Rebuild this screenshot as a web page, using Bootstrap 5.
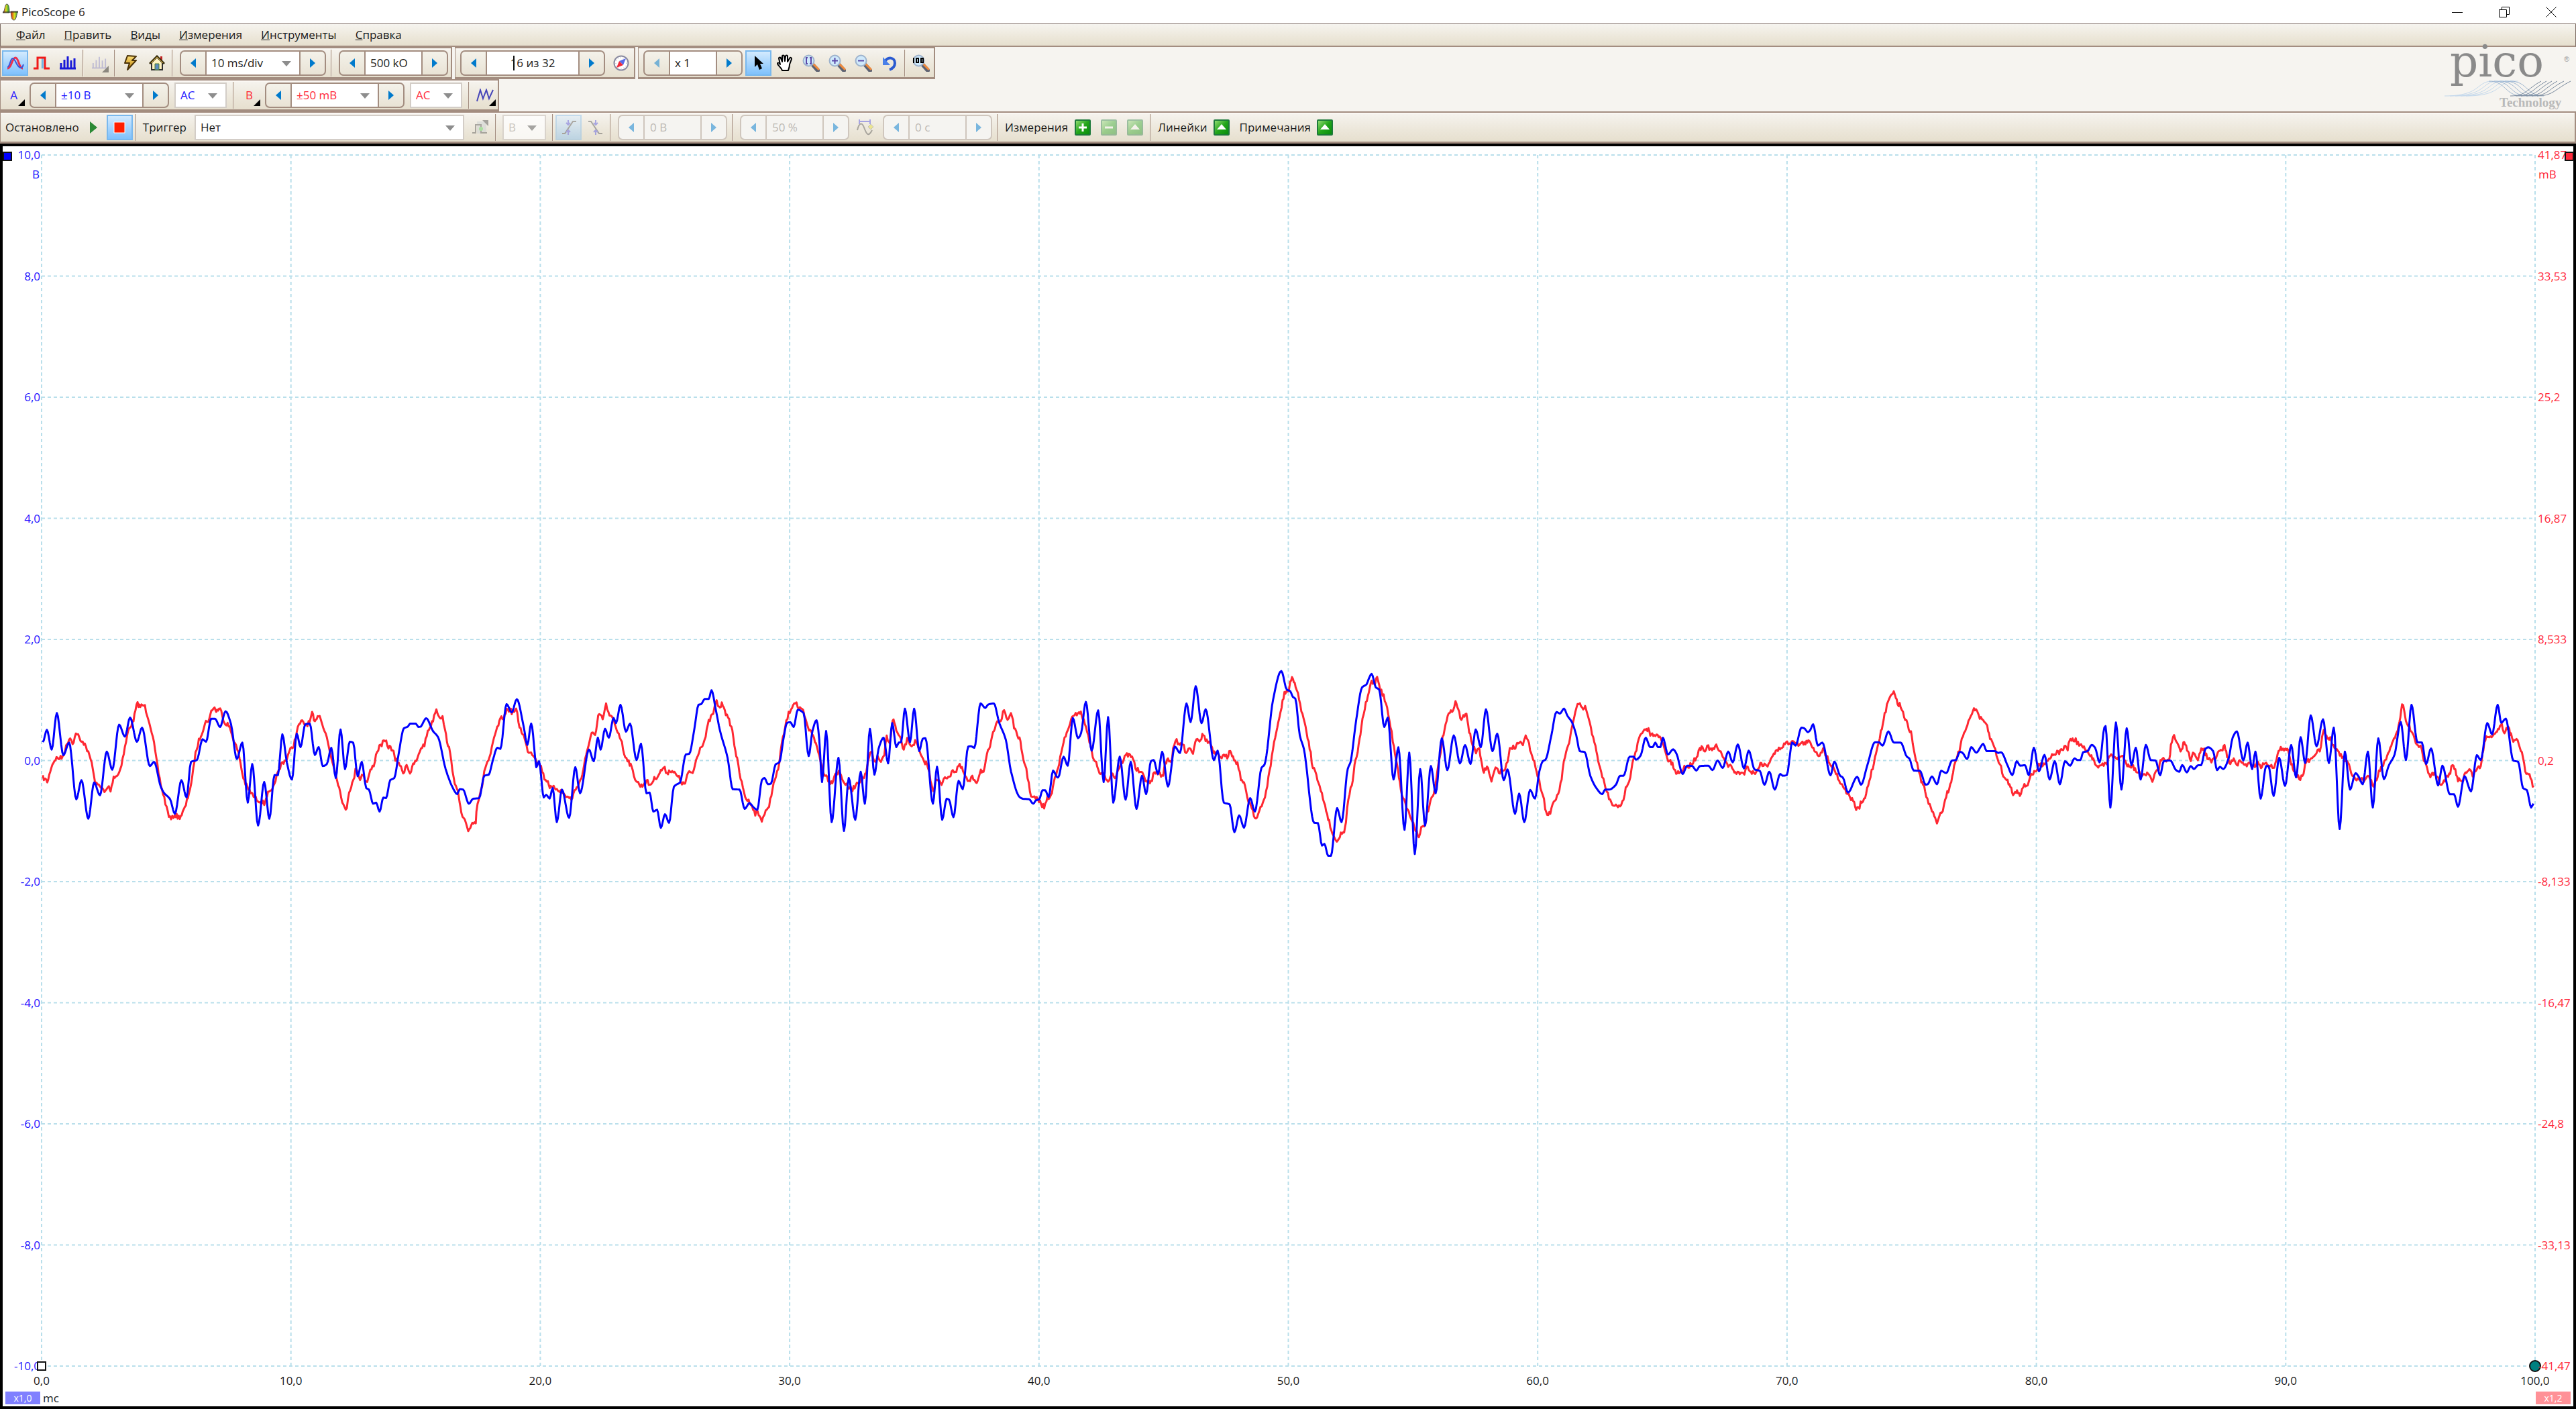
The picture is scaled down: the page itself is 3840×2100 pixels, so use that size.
<!DOCTYPE html>
<html lang="ru">
<head>
<meta charset="utf-8">
<meta name="viewport" content="width=device-width, initial-scale=1">
<title>PicoScope 6</title>
<link rel="stylesheet" href="https://cdn.jsdelivr.net/npm/bootstrap@5.3.0/dist/css/bootstrap.min.css">
<style>
:root{--edge:#a38d80;--face:linear-gradient(#f6f4ef,#ece7da 60%,#e6dfce);--chA:#2414ff;--chB:#ff2a3c;--grid:#b9dfeb}
body{font-family:"Open Sans","Noto Sans",sans-serif;font-size:17px;line-height:24px;color:#1a1a1a;background:#fff;overflow:hidden}
svg{display:block;flex:none}
.titlebar{height:35px;padding:0 2px 0 4px}
.titlebar .btn{width:70px;height:34px;padding:0;display:flex;align-items:center;justify-content:center}
.menubar{height:35px;background:var(--face);border:1px solid #7b6a62;border-bottom:2px solid var(--edge);padding:0 9px}
.menubar a{color:#1a1a1a;text-decoration:none;padding:0 14px}
.toolzone{background:#f6f4f0}
.toolbar-group{height:48px;background:var(--face);border:2px solid var(--edge);border-left-width:1px;border-bottom-width:3px;box-shadow:inset 0 2px #fbf8f4}
.first-group{padding-left:2px}
.tool{width:39px;height:38px;padding:0;border:2px solid transparent;border-radius:0;display:flex;align-items:center;justify-content:center;position:relative;flex:none;font-size:17px}
.tool.active,.tool.active:disabled{background:linear-gradient(#d3eafe,#7fc1fc)!important;border-color:#79b8ee!important}
.tool:disabled{opacity:.4;border-color:transparent}
.more::after{content:"";position:absolute;right:3px;bottom:3px;border:5px solid transparent;border-right-color:#000;border-bottom-color:#000}
.rule{width:2px;height:40px;background:var(--edge);margin:0 3px;flex:none;border-right:1px solid #efe9dd}
.spin{height:38px;border:2px solid var(--edge);border-radius:7px;margin:0 4px 0 7px;overflow:hidden;background:linear-gradient(#f4f2ea,#e9e3d5);flex:none}
.spin .step{width:36px;height:34px;padding:0;border:0;border-radius:0;display:flex;align-items:center;justify-content:center}
.spin .step:disabled{opacity:.5}
.spin.off{border-color:#cfc6bd;background:#f5f4f1}
.spin.off .field-box{border-color:#cfc6bd;background:#f5f4f1}
.field-box{border:0 solid var(--edge);border-width:0 2px;background:#fff;position:relative;height:34px}
.field-box input,.field-box select,.combo select{width:100%;height:34px;border:0;border-radius:0;padding:0 7px;font-size:17px;background:transparent;color:inherit;box-shadow:none;appearance:none;line-height:32px}
.field-box input:disabled,.combo select:disabled{color:#bdb9b4;background:transparent;opacity:1}
.drop::after{content:"";position:absolute;right:12px;top:14px;border:7px solid transparent;border-top:8px solid #8d8d8d;border-bottom:0;pointer-events:none}
.combo{height:38px;border:2px solid #d3cdc7;background:#fff;position:relative;flex:none}
.caret{position:absolute;left:39px;top:6px;width:2px;height:22px;background:#111}
.f-time{width:142px}.f-short{width:87px}.f-buffer{width:140px}.f-zoom{width:72px}.f-range{width:132px}
.c-coup{width:78px;margin:0 6px 0 4px}.c-trig{width:402px;margin:0 4px 0 10px}.c-src{width:65px;margin:0 6px}
.cha{color:var(--chA)}.chb{color:var(--chB)}
.brand{width:196px;color:#8c8c8c}
.scope{border:4px solid #000;background:#fff}
.yaxis{width:58px;position:relative}
.yaxis.right{width:57px}
.yaxis .tick{height:0;display:flex;align-items:center}
.yaxis .unit{position:absolute;top:17px}
.left-labels .tick{justify-content:flex-end;padding-right:2px}
.right-labels .tick{padding-left:4px;white-space:nowrap}
.left-labels .unit{right:3px}.right-labels .unit{left:5px}
.scope-body{padding-top:13px;min-height:0}
.xaxis{height:38px;padding:10px 57px 0 58px}
.xaxis .tick{width:0;display:flex;justify-content:center;white-space:nowrap}
.scale-row{height:22px;padding:0 4px 3px}
.scale-tag{width:52px;height:19px;line-height:19px;font-size:14px;text-align:center;color:#fff}
.tag-a{background:#8080ff}.tag-b{background:#ff9197}
.grip{position:absolute;width:14px;height:14px;border:2px solid #111}
.grip-a{left:0;top:-5px;background:#00f}
.grip-b{right:-1px;top:-5px;background:var(--chB)}
.grip-origin{left:-7px;bottom:-7px;background:#fff}
.grip-end{right:-9px;bottom:-9px;width:18px;height:18px;border-radius:9px;background:#008080}
.plot{position:relative;min-width:0}
.plot svg{position:absolute;inset:0;width:100%;height:100%;overflow:visible}
.gridline{stroke:var(--grid);stroke-width:2;stroke-dasharray:5 4;vector-effect:non-scaling-stroke}
.trace{fill:none;stroke-width:3;stroke-linejoin:round;vector-effect:non-scaling-stroke}
.lbl{padding:0 2px 0 7px}
</style>
<script src="https://cdn.jsdelivr.net/npm/bootstrap@5.3.0/dist/js/bootstrap.bundle.min.js"></script>
</head>
<body class="vh-100 d-flex flex-column">

<svg width="0" height="0" class="position-absolute" aria-hidden="true">
  <defs>
    <linearGradient id="gGreen" x1="0" y1="0" x2="1" y2="1"><stop offset="0" stop-color="#9be07a"/><stop offset=".5" stop-color="#22a51a"/><stop offset="1" stop-color="#058a0a"/></linearGradient>
    <linearGradient id="gBolt" x1="0" y1="0" x2="0" y2="1"><stop offset="0" stop-color="#ffe27a"/><stop offset="1" stop-color="#b87a00"/></linearGradient>
    <linearGradient id="gPulse"><stop offset="0" stop-color="#7a4a58"/><stop offset=".4" stop-color="#3a9ad8"/><stop offset="1" stop-color="#d8f0ff"/></linearGradient>
    <linearGradient id="gRainA" x1="0" y1="0" x2="1" y2="0"><stop offset="0" stop-color="#e01010"/><stop offset=".5" stop-color="#d8e020"/><stop offset="1" stop-color="#109040"/></linearGradient>
    <symbol id="i-left" viewBox="0 0 10 14"><path d="M9 0v14L1 7z" fill="#007acc"/></symbol>
    <symbol id="i-right" viewBox="0 0 10 14"><path d="M1 0v14l8-7z" fill="#007acc"/></symbol>
    <symbol id="i-lens" viewBox="0 0 26 26"><path d="M16 16l7 8" stroke="#5c6272" stroke-width="6" stroke-linecap="round"/><path d="M17 15l7 7" stroke="#f08a3c" stroke-width="3" stroke-linecap="round"/><circle cx="9.500" cy="9.500" r="8" fill="#cfe9fb" stroke="#9db2cc" stroke-width="2"/></symbol>
    <symbol id="i-up" viewBox="0 0 24 24"><rect x="1" y="1" width="22" height="22" rx="1" fill="url(#gGreen)" stroke="#1c7a3a" stroke-width="2"/><path d="M12 7l7 8H5z" fill="#fff"/></symbol>
  </defs>
</svg>

<header class="titlebar d-flex align-items-center">
  <svg width="24" height="26" viewBox="0 0 24 26"><path d="M0 14C3 14 3 1 6 1s4 5 4 13z" fill="url(#gRainA)" stroke="#555"/><path d="M12 12h11c-2 0-2 13-6 13s-4-5-5-13z" fill="url(#gRainA)" stroke="#555"/><path d="M0 13h23" stroke="#222"/></svg>
  <span class="ms-1 me-auto">PicoScope 6</span>
  <div class="d-flex">
    <button class="btn" aria-label="Свернуть"><svg width="16" height="16"><path d="M0 8.500h16" stroke="#000"/></svg></button>
    <button class="btn" aria-label="Восстановить"><svg width="16" height="16"><path d="M.5 4.500h11v11H.5zM4.500 4V.5h11v11H12" fill="none" stroke="#000"/></svg></button>
    <button class="btn" aria-label="Закрыть"><svg width="16" height="16"><path d="M.5.5l15 15M15.500.5l-15 15" stroke="#000"/></svg></button>
  </div>
</header>

<nav class="menubar d-flex align-items-center">
  <a href="#"><u>Ф</u>айл</a><a href="#"><u>П</u>равить</a><a href="#"><u>В</u>иды</a><a href="#"><u>И</u>змерения</a><a href="#"><u>И</u>нструменты</a><a href="#"><u>С</u>правка</a>
</nav>

<div class="toolzone d-flex justify-content-between">
  <div>
    <div class="d-flex gap-1">
      <div class="toolbar-group first-group d-flex align-items-center">
        <button class="btn tool active" aria-label="Осциллограф"><svg width="26" height="24" viewBox="0 0 26 24"><path d="M1 20C7 20 8 4 13 4s5 16 11 16" fill="none" stroke="#f0304a" stroke-width="3"/><path d="M1 18C5 18 5 5 9 5s6 14 12 14c3 0 3-3 4-5" fill="none" stroke="#3a55d8" stroke-width="2"/></svg></button>
        <button class="btn tool" aria-label="Послесвечение"><svg width="24" height="20" viewBox="0 0 24 20"><path d="M8 3h9v15H12V3z" fill="url(#gPulse)"/><path d="M0 18h6V2h11v16h7" fill="none" stroke="#f01818" stroke-width="3"/></svg></button>
        <button class="btn tool" aria-label="Спектр"><svg width="24" height="20" viewBox="0 0 24 20"><path d="M0 18h24M2 18v-8M7 18V5M12 18V0M17 18V6M22 18V3" fill="none" stroke="#1818d8" stroke-width="3"/></svg></button>
        <span class="rule"></span>
        <button class="btn tool more" disabled aria-label="Параметры спектра"><svg width="22" height="20" viewBox="0 0 24 20"><path d="M0 18h24M2 18v-8M7 18V5M12 18V0M17 18V6M22 18V3" fill="none" stroke="#7878c8" stroke-width="2"/></svg></button>
        <span class="rule"></span>
        <button class="btn tool" aria-label="Автонастройка"><svg width="22" height="24" viewBox="0 0 22 24"><path d="M6 1l13 1-6 6h6L6 22l3-10H2z" fill="url(#gBolt)" stroke="#4a3208" stroke-width="2" stroke-linejoin="round"/></svg></button>
        <button class="btn tool" aria-label="Запуск"><svg width="24" height="24" viewBox="0 0 24 24"><path d="M17 2h3v8h-3z" fill="#c02020"/><path d="M4 11v11h16V11l-8-8z" fill="#fff2c0" stroke="#303030" stroke-width="2"/><path d="M1 13L12 2l11 11" fill="none" stroke="#3a3010" stroke-width="3"/><path d="M3 12l9-9 9 9" fill="none" stroke="#d8b040" stroke-width="1"/><path d="M9 13h6v9H9z" fill="#5d8cc0" stroke="#4a7a30"/></svg></button>
        <span class="rule"></span>
        <div class="spin d-flex"><button class="btn step" aria-label="Медленнее"><svg width="10" height="14"><use href="#i-left"/></svg></button><div class="field-box drop f-time"><select aria-label="Развёртка"><option>10 ms/div</option></select></div><button class="btn step" aria-label="Быстрее"><svg width="10" height="14"><use href="#i-right"/></svg></button></div>
        <span class="rule"></span>
        <div class="spin d-flex"><button class="btn step" aria-label="Меньше"><svg width="10" height="14"><use href="#i-left"/></svg></button><div class="field-box f-short"><input aria-label="Выборки" value="500 kO"></div><button class="btn step" aria-label="Больше"><svg width="10" height="14"><use href="#i-right"/></svg></button></div>
      </div>
      <div class="toolbar-group d-flex align-items-center">
        <div class="spin d-flex"><button class="btn step" aria-label="Предыдущий буфер"><svg width="10" height="14"><use href="#i-left"/></svg></button><div class="field-box f-buffer"><input class="text-center" aria-label="Буфер" value="16 из 32"><i class="caret"></i></div><button class="btn step" aria-label="Следующий буфер"><svg width="10" height="14"><use href="#i-right"/></svg></button></div>
        <button class="btn tool" aria-label="Обзор буферов"><svg width="24" height="24" viewBox="0 0 24 24"><circle cx="12" cy="12" r="10.500" fill="#fff" stroke="#8a8aa0" stroke-width="2"/><circle cx="12" cy="12" r="8" fill="none" stroke="#99a" stroke-dasharray="1 3"/><path d="M19 5l-4 10-6-6z" fill="#5a6ae8"/><path d="M5 19l4-10 6 6z" fill="#f02838"/></svg></button>
      </div>
      <div class="toolbar-group d-flex align-items-center">
        <div class="spin d-flex"><button class="btn step" disabled aria-label="Уменьшить масштаб"><svg width="10" height="14"><use href="#i-left"/></svg></button><div class="field-box f-zoom"><input aria-label="Масштаб" value="x 1"></div><button class="btn step" aria-label="Увеличить масштаб"><svg width="10" height="14"><use href="#i-right"/></svg></button></div>
        <button class="btn tool active" aria-label="Выделение"><svg width="16" height="24" viewBox="0 0 16 24"><path d="M2 1v17l4-4 3 8 4-2-3-7h5z" fill="#000"/></svg></button>
        <button class="btn tool" aria-label="Рука"><svg width="26" height="26" viewBox="0 0 26 26"><path d="M9 24c-1-4-6-7-7-10 0-2 2-2 4 1L4 6c0-2 3-2 3 0l2 5V3c0-2 3-2 3 0l1 7 1-7c0-2 3-2 3 0v8l3-5c1-2 3-1 3 1l-3 8c0 4-1 6-2 9z" fill="#fff" stroke="#000" stroke-width="2" stroke-linejoin="round"/></svg></button>
        <button class="btn tool" aria-label="Окно масштаба"><svg width="26" height="26" viewBox="0 0 26 26"><use href="#i-lens"/><path d="M8 5H6v9h2M11 5h2v9h-2" fill="none" stroke="#5a48a8" stroke-width="2"/></svg></button>
        <button class="btn tool" aria-label="Увеличить"><svg width="26" height="26" viewBox="0 0 26 26"><use href="#i-lens"/><path d="M5 9.500h9M9.500 5v9" stroke="#5a48a8" stroke-width="2"/></svg></button>
        <button class="btn tool" aria-label="Уменьшить"><svg width="26" height="26" viewBox="0 0 26 26"><use href="#i-lens"/><path d="M5 9.500h9" stroke="#5a48a8" stroke-width="2"/></svg></button>
        <button class="btn tool" aria-label="Отменить масштаб"><svg width="24" height="24" viewBox="0 0 24 24"><path d="M5 10C9 2 20 3 20 12c0 5-3 8-8 10" fill="none" stroke="#2a5ad0" stroke-width="4"/><path d="M2 3v12h11z" fill="#4a80e8"/></svg></button>
        <span class="rule"></span>
        <button class="btn tool" aria-label="Масштаб 100"><svg width="26" height="26" viewBox="0 0 26 26"><use href="#i-lens"/><path d="M2 5v8M6 6h3v6H6zM13 6h3v6h-3z" fill="none" stroke="#000" stroke-width="2"/></svg></button>
      </div>
    </div>
    <div class="d-flex">
      <div class="toolbar-group d-flex align-items-center">
        <button class="btn tool more cha border-0">A</button>
        <div class="spin d-flex cha ms-1"><button class="btn step" aria-label="Диапазон A вниз"><svg width="10" height="14"><use href="#i-left"/></svg></button><div class="field-box drop f-range"><select aria-label="Диапазон A"><option>±10 В</option></select></div><button class="btn step" aria-label="Диапазон A вверх"><svg width="10" height="14"><use href="#i-right"/></svg></button></div>
        <div class="combo drop c-coup cha"><select aria-label="Связь A"><option>AC</option></select></div>
        <span class="rule"></span>
        <button class="btn tool more chb border-0">B</button>
        <div class="spin d-flex chb ms-1"><button class="btn step" aria-label="Диапазон B вниз"><svg width="10" height="14"><use href="#i-left"/></svg></button><div class="field-box drop f-range"><select aria-label="Диапазон B"><option>±50 mB</option></select></div><button class="btn step" aria-label="Диапазон B вверх"><svg width="10" height="14"><use href="#i-right"/></svg></button></div>
        <div class="combo drop c-coup chb"><select aria-label="Связь B"><option>AC</option></select></div>
        <span class="rule"></span>
        <button class="btn tool more border-0" aria-label="Генератор"><svg width="26" height="20" viewBox="0 0 26 20"><path d="M1 19L6 2l4 13 5-13 4 13 6-13" fill="none" stroke="#4444b8" stroke-width="2"/></svg></button>
      </div>
    </div>
  </div>
  <div class="brand">
    <svg class="overflow-visible" width="196" height="96" viewBox="0 0 196 96">
      <g fill="none" stroke-width="1">
        <g stroke="#c3d8ec"><path d="M0 73C56 73 46 51 72 51h30M8 73C64 73 54 51 80 51h30M16 73C72 73 62 51 88 51M24 73C80 73 70 51 96 51M32 73C88 73 78 51 104 51"/></g>
        <g stroke="#9fb6d0"><path d="M66 51c26 0 24 22 50 22M74 51c26 0 24 22 50 22M82 51c26 0 24 22 50 22M90 51c26 0 24 22 50 22M98 51c26 0 24 22 50 22"/></g>
        <g stroke="#77889c"><path d="M98 73c24 0 24-10 46-22M106 73c24 0 24-10 46-22M114 73c24 0 24-10 46-22M122 73c24 0 24-10 46-22M130 73c24 0 24-10 48-22M138 73c24 0 26-10 50-22"/></g>
      </g>
      <text x="8" y="44" font-family="DejaVu Serif, serif" font-size="66" fill="#8a8a8a">pico</text>
      <text x="178" y="22" font-family="Liberation Sans, sans-serif" font-size="11" fill="#9a9a9a">®</text>
      <text x="82" y="89" font-family="Liberation Serif, serif" font-size="19" font-weight="bold" fill="#b9b9b9">Technology</text>
    </svg>
  </div>
</div>

<div class="toolbar-group d-flex align-items-center flex-shrink-0">
  <span class="lbl">Остановлено</span>
  <button class="btn tool" aria-label="Пуск"><svg width="11" height="18"><path d="M0 0v18l11-9z" fill="#2c8a35"/></svg></button>
  <button class="btn tool active" aria-label="Стоп"><svg width="18" height="18"><path d="M1 1h16v16H1z" fill="#ff1e00" stroke="#fff" stroke-width="1"/></svg></button>
  <span class="rule"></span>
  <label class="lbl" for="trig">Триггер</label>
  <div class="combo drop c-trig"><select id="trig"><option>Нет</option></select></div>
  <button class="btn tool" disabled aria-label="Параметры триггера"><svg width="26" height="24" viewBox="0 0 26 24"><path d="M8 3h14v18H8z" fill="#c4ccd0"/><path d="M1 20h5V8h8v12h9" fill="none" stroke="#444" stroke-width="2"/><circle cx="14" cy="14" r="3" fill="#48d048"/><path d="M16 1h9v9z" fill="#333"/></svg></button>
  <span class="rule"></span>
  <div class="combo drop c-src opacity-75"><select disabled aria-label="Источник"><option>B</option></select></div>
  <span class="rule"></span>
  <button class="btn tool active" disabled aria-label="Фронт"><svg width="22" height="22" viewBox="0 0 22 22"><path d="M1 20h4L17 2h5" fill="none" stroke="#444" stroke-width="2"/><path d="M10 0v7M7 4l3 3 3-3M10 22v-7M7 18l3-3 3 3" fill="none" stroke="#4040e0" stroke-width="2"/></svg></button>
  <button class="btn tool" disabled aria-label="Спад"><svg width="22" height="22" viewBox="0 0 22 22"><path d="M1 2h4l12 18h5" fill="none" stroke="#444" stroke-width="2"/><path d="M12 0v7M9 4l3 3 3-3M12 22v-7M9 18l3-3 3 3" fill="none" stroke="#4040e0" stroke-width="2"/></svg></button>
  <span class="rule"></span>
  <div class="spin off d-flex"><button class="btn step" disabled aria-label="Порог вниз"><svg width="10" height="14"><use href="#i-left"/></svg></button><div class="field-box f-short"><input class="ps-2" disabled aria-label="Порог" value="0 В"></div><button class="btn step" disabled aria-label="Порог вверх"><svg width="10" height="14"><use href="#i-right"/></svg></button></div>
  <span class="rule"></span>
  <div class="spin off d-flex"><button class="btn step" disabled aria-label="Предзапуск вниз"><svg width="10" height="14"><use href="#i-left"/></svg></button><div class="field-box f-short"><input class="ps-2" disabled aria-label="Предзапуск" value="50 %"></div><button class="btn step" disabled aria-label="Предзапуск вверх"><svg width="10" height="14"><use href="#i-right"/></svg></button></div>
  <button class="btn tool" disabled aria-label="Задержка"><svg width="26" height="24" viewBox="0 0 26 24"><path d="M1 16C4 4 8 4 11 12s6 16 12 4" fill="none" stroke="#444" stroke-width="2"/><path d="M4 3h16M4 0v7M20 0v7" stroke="#3838e0" stroke-width="2"/><path d="M21 7l4 4-4 4-4-4z" fill="#e8e020" stroke="#887"/></svg></button>
  <div class="spin off d-flex"><button class="btn step" disabled aria-label="Задержка вниз"><svg width="10" height="14"><use href="#i-left"/></svg></button><div class="field-box f-short"><input class="ps-2" disabled aria-label="Время задержки" value="0 с"></div><button class="btn step" disabled aria-label="Задержка вверх"><svg width="10" height="14"><use href="#i-right"/></svg></button></div>
  <span class="rule"></span>
  <span class="lbl">Измерения</span>
  <button class="btn tool" aria-label="Добавить измерение"><svg width="24" height="24" viewBox="0 0 24 24"><rect x="1" y="1" width="22" height="22" rx="1" fill="url(#gGreen)" stroke="#1c7a3a" stroke-width="2"/><path d="M12 6v12M6 12h12" stroke="#fff" stroke-width="3"/></svg></button>
  <button class="btn tool" disabled aria-label="Удалить измерение"><svg width="24" height="24" viewBox="0 0 24 24"><rect x="1" y="1" width="22" height="22" rx="1" fill="url(#gGreen)" stroke="#1c7a3a" stroke-width="2"/><path d="M6 12h12" stroke="#fff" stroke-width="3"/></svg></button>
  <button class="btn tool" disabled aria-label="Изменить измерение"><svg width="24" height="24"><use href="#i-up"/></svg></button>
  <span class="rule"></span>
  <span class="lbl">Линейки</span>
  <button class="btn tool" aria-label="Линейки"><svg width="24" height="24"><use href="#i-up"/></svg></button>
  <span class="lbl">Примечания</span>
  <button class="btn tool" aria-label="Примечания"><svg width="24" height="24"><use href="#i-up"/></svg></button>
</div>

<main class="scope flex-fill d-flex flex-column">
  <div class="scope-body flex-fill d-flex">
    <div class="yaxis left-labels cha d-flex flex-column justify-content-between">
      <span class="tick">10,0</span><span class="tick">8,0</span><span class="tick">6,0</span><span class="tick">4,0</span><span class="tick">2,0</span><span class="tick">0,0</span><span class="tick">-2,0</span><span class="tick">-4,0</span><span class="tick">-6,0</span><span class="tick">-8,0</span><span class="tick">-10,0</span>
      <span class="unit">В</span><i class="grip grip-a"></i>
    </div>
    <div class="plot flex-fill">
      <svg viewBox="62 232 3717 1804" preserveAspectRatio="none" role="img" aria-label="Осциллограммы каналов A и B">
        <g id="grid"></g>
        <path id="traceB" class="trace" stroke="#ff2832"/>
        <path id="traceA" class="trace" stroke="#0000ff"/>
      </svg>
      <i class="grip grip-origin"></i><i class="grip grip-end"></i>
    </div>
    <div class="yaxis right right-labels chb d-flex flex-column justify-content-between">
      <span class="tick">41,87</span><span class="tick">33,53</span><span class="tick">25,2</span><span class="tick">16,87</span><span class="tick">8,533</span><span class="tick">0,2</span><span class="tick">-8,133</span><span class="tick">-16,47</span><span class="tick">-24,8</span><span class="tick">-33,13</span><span class="tick">-41,47</span>
      <span class="unit">mB</span><i class="grip grip-b"></i>
    </div>
  </div>
  <div class="xaxis d-flex justify-content-between">
    <span class="tick">0,0</span><span class="tick">10,0</span><span class="tick">20,0</span><span class="tick">30,0</span><span class="tick">40,0</span><span class="tick">50,0</span><span class="tick">60,0</span><span class="tick">70,0</span><span class="tick">80,0</span><span class="tick">90,0</span><span class="tick">100,0</span>
  </div>
  <div class="scale-row d-flex align-items-center">
    <span class="scale-tag tag-a">x1,0</span><span class="ms-1 me-auto">mc</span><span class="scale-tag tag-b">x1,2</span>
  </div>
</main>

<script>
const channelB = [
 [0,1.96,"125,538 138,555 150,490 165,452 180,450 190,415 205,360 212,380 225,338 235,378 248,385 258,430 268,470 275,540 282,570 295,575 305,605 318,580 323,598 332,535 345,525 355,475 365,405 375,330 390,280 402,210 410,220 420,215 430,255 440,310 450,390 460,490 470,570 480,630 490,690 500,725 510,705 522,715 540,675 552,605 562,540 568,460 578,390 590,335 602,290 612,275 620,230 627,228 632,240 640,232 650,255 655,290 665,300 680,355 690,400 700,450 708,520 720,575 735,610 750,635 765,645 772,655 780,615 795,600 805,545 815,510 825,470 835,460 845,425 858,390 870,320 880,290 895,300 905,290 912,255 920,295 928,258 937,270 945,315 955,360 962,410 972,470 985,545 997,620 1010,685 1020,600 1032,555 1042,495 1052,545 1060,520 1070,560 1082,510 1092,480 1102,420 1112,395 1125,378 1135,400 1147,412 1155,460 1165,470 1178,515 1188,480 1198,515 1210,475 1220,455 1230,405 1240,390 1250,330 1262,295 1275,235 1283,262 1293,270 1300,330 1312,410 1322,500 1332,580 1340,620 1348,700 1358,735 1368,775 1380,740 1390,740 1392,680 1402,610 1412,550 1418,490 1430,450 1440,390 1450,330 1465,275 1475,262 1480,235 1490,235 1495,245 1508,240 1518,310 1530,350 1542,415 1555,430 1565,450"],
 [780,1.96,"40,465 52,490 62,540 72,555 80,585 95,585 110,600 125,620 140,632 150,600 160,570 170,540 178,480 190,405 200,335 210,350 222,255 232,275 242,215 252,265 262,275 270,310 285,365 295,430 308,465 320,510 330,550 345,575 360,555 370,570 380,550 392,530 402,510 410,495 420,515 432,505 445,525 455,540 470,570 482,520 495,515 505,460 517,405 530,370 542,290 555,250 565,200 572,225 583,210 595,265 608,310 617,390 625,460 635,540 645,605 655,640 665,650 678,700 682,690 697,725 705,700 715,680 725,610 735,550 745,500 752,420 762,340 772,270 782,230 795,200 805,230 818,245 825,285 835,325 847,345 855,390 865,440 875,505 885,530 900,560 912,520 922,515 935,550 945,575 962,590 975,560 990,545 1002,520 1008,465 1017,425 1025,465 1035,450 1045,465 1055,440 1062,355 1068,385 1082,280 1090,330 1100,360 1112,410 1122,370 1135,395 1145,380 1155,410 1165,455 1180,480 1190,545 1198,590 1208,550 1222,565 1232,530 1242,545 1255,500 1262,515 1272,485 1285,510 1295,545 1302,558 1312,540 1325,555 1337,505 1345,515 1355,440 1367,380 1378,310 1385,280 1395,285 1405,240 1415,280 1425,250 1437,330 1450,365 1458,440 1470,500 1477,570 1487,625 1497,630 1510,650 1522,668 1532,630 1542,620 1550,560 1560,500"],
 [1560,1.96,"40,455 50,380 62,330 72,280 82,265 95,243 103,260 112,300 122,345 132,425 145,475 155,515 170,530 180,550 190,520 200,535 210,500 222,465 235,437 250,440 260,495 270,510 280,525 292,550 302,565 315,520 325,515 338,530 347,480 355,455 365,465 370,410 377,370 387,395 395,385 408,420 418,405 428,425 438,358 447,370 458,348 468,375 478,385 487,425 500,440 515,445 528,445 537,410 545,450 558,475 568,540 580,580 590,640 600,670 612,722 622,690 635,640 645,570 655,480 665,380 677,300 687,220 698,155 708,150 712,110 720,98 728,130 738,190 748,255 760,340 772,430 775,480 785,500 795,565 808,630 820,700 832,770 842,810 852,815 860,790 867,785 875,730 882,630 892,570 900,490 912,400 920,310 930,230 942,160 950,105 957,120 966,88 975,140 985,175 995,230 1005,310 1015,400 1027,500 1035,590 1045,640 1055,680 1065,720 1075,755 1088,795 1095,765 1103,760 1112,700 1122,650 1135,590 1142,510 1152,420 1160,340 1172,265 1185,240 1195,203 1203,235 1212,275 1227,258 1235,330 1247,400 1255,425 1262,400 1270,470 1278,510 1287,490 1300,550 1312,500 1325,510 1340,500 1347,460 1357,400 1367,405 1378,380 1385,370 1392,385 1400,358 1410,395 1422,450 1432,510 1440,560 1450,610 1457,670 1463,705 1472,690 1482,655 1492,620 1502,570 1508,510 1515,440 1527,390 1535,310 1545,250 1555,207 1565,235"],
 [2340,1.96,"45,225 55,280 65,340 75,390 83,470 95,530 105,585 118,640 128,670 135,655 147,675 157,630 167,570 177,530 183,470 195,410 205,355 215,335 230,325 238,350 247,340 257,355 268,370 278,420 288,460 300,480 308,515 325,515 335,490 347,490 358,470 370,445 380,410 388,400 395,415 405,400 413,418 428,400 438,425 450,445 460,480 475,495 487,520 500,515 507,520 520,490 532,515 545,515 557,475 575,485 590,445 605,420 620,400 632,385 645,380 655,370 665,390 680,385 700,380 712,405 727,435 740,415 750,440 762,475 778,515 790,560 805,590 815,620 825,635 837,675 843,680 850,655 860,640 872,570 882,510 892,450 900,390 912,320 920,260 930,200 940,157 950,165 958,205 967,220 977,260 987,305 997,340 1005,410 1015,480 1027,550 1035,580 1045,640 1055,670 1065,715 1073,735 1080,705 1090,680 1100,620 1112,570 1120,510 1132,450 1142,395 1152,335 1165,290 1175,245 1187,235 1198,270 1208,290 1217,300 1228,360 1240,400 1250,450 1260,495 1270,540 1282,560 1290,590 1298,612 1307,595 1315,610 1325,580 1338,570 1345,530 1360,515 1370,485 1385,475 1400,455 1415,430 1430,425 1445,405 1455,408 1460,370 1475,370 1485,385 1497,400 1505,410 1515,435 1527,450 1535,470 1547,488 1560,480"],
 [3080,2.063,"122,482 132,440 145,448 160,450 175,445 185,475 200,485 215,505 225,520 240,520 255,530 265,550 275,520 285,500 290,470 305,455 317,465 322,400 332,358 342,390 355,415 363,380 372,410 383,455 390,420 398,450 405,465 410,440 418,400 428,430 437,455 450,465 460,450 470,425 478,415 487,400 495,440 505,475 512,460 525,475 540,468 552,485 562,470 580,485 590,470 602,490 612,465 625,490 640,485 650,440 660,408 670,420 677,410 685,430 692,470 700,500 710,530 720,540 730,515 738,470 750,460 760,455 770,425 780,415 787,360 795,330 803,365 812,365 822,400 832,410 845,440 858,460 870,490 880,530 893,545 905,545 915,550 928,530 945,575 958,530 965,500 975,480 987,450 997,410 1005,370 1017,340 1025,290 1033,212 1040,235 1045,290 1055,310 1065,340 1072,375 1082,400 1090,395 1100,460 1110,500 1120,530 1135,520 1145,550 1155,570 1165,545 1178,530 1188,485 1197,510 1205,545 1218,550 1228,520 1240,505 1250,525 1262,500 1275,485 1283,410 1292,355 1305,350 1315,345 1325,330 1337,300 1348,330 1360,320 1368,350 1375,370 1385,362 1395,395 1405,450 1412,510 1425,530 1438,575"]
];
const channelA = [
 [0,1.96,"125,380 137,325 151,413 166,250 185,438 202,382 223,635 238,550 258,722 275,560 292,617 312,422 328,503 348,302 365,355 380,270 400,378 415,315 438,487 450,468 470,580 480,608 497,635 511,700 530,550 545,627 558,468 575,460 592,367 602,378 617,275 628,275 643,312 659,242 675,300 692,455 708,382 724,650 737,478 754,752 772,558 787,722 802,527 812,527 825,345 838,470 853,547 867,342 878,402 892,300 905,297 920,437 931,402 943,487 955,478 968,405 981,540 995,323 1008,500 1022,378 1032,382 1045,532 1057,468 1070,585 1078,592 1090,655 1099,650 1109,690 1120,628 1128,630 1140,550 1152,540 1165,430 1180,318 1192,310 1198,297 1215,297 1222,312 1230,310 1237,290 1245,273 1265,330 1280,358 1302,500 1325,590 1336,612 1343,590 1353,592 1370,655 1382,633 1400,630 1415,530 1428,525 1440,460 1453,405 1462,410 1480,210 1495,247 1510,188 1530,310 1541,392 1552,297 1566,485"],
 [780,1.96,"38,492 46,465 60,627 67,615 77,632 86,585 98,737 113,592 134,718 152,492 166,608 192,413 206,465 218,360 226,413 239,320 250,360 264,272 271,295 284,213 300,333 312,297 331,460 344,387 360,608 369,605 380,690 391,682 402,763 414,702 426,740 440,580 447,570 458,560 475,435 485,432 500,320 512,213 520,210 530,187 542,187 550,148 562,230 575,330 597,450 612,590 632,592 647,678 661,652 672,670 684,682 697,550 705,540 715,568 724,565 737,480 748,470 762,350 770,295 780,290 790,312 802,235 819,250 834,442 845,330 857,282 865,370 873,558 885,330 901,737 921,450 937,777 951,540 970,727 986,512 998,655 1013,320 1026,525 1038,410 1053,360 1066,475 1078,295 1090,402 1097,382 1104,380 1115,230 1130,380 1142,230 1157,420 1167,365 1175,362 1197,655 1209,490 1224,727 1237,633 1244,637 1257,715 1272,553 1284,590 1300,400 1308,398 1318,405 1336,207 1350,227 1358,212 1375,207 1390,290 1410,370 1425,510 1450,625 1460,633 1478,635 1490,655 1498,640 1508,635 1517,595 1525,595 1535,625 1548,507 1561,538"],
 [1560,1.96,"34,538 50,445 62,485 77,272 92,362 101,340 115,200 132,418 151,238 167,558 180,268 195,650 214,445 231,637 246,468 263,678 279,530 291,612 305,465 313,460 326,522 338,423 355,578 375,400 390,428 409,207 421,290 436,130 453,295 465,233 489,460 500,418 518,650 535,658 549,782 563,707 577,762 595,630 609,690 628,495 637,480 662,190 686,62 702,145 712,152 720,178 727,185 740,350 752,410 782,740 793,742 805,842 812,835 823,888 831,888 849,675 862,737 880,500 888,470 905,280 922,135 935,122 942,95 950,75 962,135 972,145 987,312 997,270 1014,547 1028,403 1046,772 1060,427 1076,880 1092,500 1106,753 1123,487 1137,608 1155,363 1171,505 1190,350 1208,475 1223,393 1239,477 1254,323 1269,402 1284,233 1303,420 1317,342 1336,550 1347,502 1369,700 1381,610 1396,737 1413,593 1427,632 1440,510 1450,465 1458,458 1475,350 1490,245 1500,252 1512,230 1522,262 1535,290 1548,350 1558,420 1565,422"],
 [2340,1.96,"38,422 44,425 60,530 80,590 95,612 103,592 115,592 135,570 147,530 157,530 175,445 187,445 193,458 207,440 222,360 235,402 242,402 250,382 258,402 265,402 272,360 287,435 302,412 312,432 330,522 343,485 358,487 370,507 380,487 405,485 417,505 432,462 447,495 463,422 476,470 491,390 509,497 523,418 540,502 555,508 569,570 583,512 599,592 615,522 622,530 634,527 650,382 660,395 677,315 685,318 696,335 703,325 711,300 725,395 738,382 762,528 773,467 790,530 798,538 813,605 840,535 851,570 870,480 892,380 903,380 914,395 931,332 947,382 967,382 985,445 992,452 1005,507 1023,508 1040,570 1046,568 1058,533 1073,568 1085,508 1100,518 1117,462 1128,460 1140,423 1148,428 1161,455 1173,402 1188,427 1200,402 1208,387 1218,420 1242,420 1252,428 1260,425 1280,487 1293,527 1306,465 1316,485 1330,483 1341,527 1356,405 1371,510 1387,437 1402,547 1417,465 1432,568 1447,465 1462,485 1475,452 1483,460 1492,460 1500,425 1513,420 1525,392 1535,405 1548,470 1562,315"],
 [3080,2.063,"121,308 136,672 153,292 170,592 186,318 201,483 214,405 229,547 245,392 260,460 275,462 289,528 300,465 320,462 338,505 348,512 357,482 371,515 383,487 393,500 406,483 415,483 428,410 437,403 452,420 464,505 473,490 483,500 500,450 512,360 525,332 545,462 558,382 572,500 582,422 598,632 615,487 622,487 638,620 655,450 673,575 692,393 707,537 721,358 735,473 752,260 770,398 790,278 808,473 823,315 841,768 857,422 873,592 890,518 900,535 912,568 928,422 943,672 960,363 977,545 992,485 1010,435 1029,290 1045,460 1062,213 1080,380 1094,382 1107,477 1122,408 1144,573 1157,485 1180,613 1193,613 1205,668 1225,532 1245,600 1263,438 1275,460 1295,295 1310,345 1327,213 1338,293 1352,275 1375,462 1390,468 1405,585 1417,595 1430,672 1437,655"]
];
const toPoints = blocks => blocks.flatMap(([start, rate, list]) =>
  list.split(" ").map(p => { const [t, v] = p.split(",").map(Number); return [start + t / rate, 980 + v / 3]; }));

// Monotone interpolation keeps the sampled peaks; noise is repeatable.
function tracePath(points, noise) {
  const n = points.length, slope = [], tangent = [];
  for (let i = 0; i < n - 1; i++) slope[i] = (points[i+1][1] - points[i][1]) / (points[i+1][0] - points[i][0]);
  for (let i = 0; i < n; i++) {
    const a = slope[i-1], b = slope[i];
    tangent[i] = a === undefined || b === undefined || a * b <= 0 ? 0 : 2 * a * b / (a + b);
  }
  let d = "", seed = 7;
  for (let i = 0; i < n - 1; i++) {
    const [x0, y0] = points[i], [x1, y1] = points[i+1], h = x1 - x0, steps = Math.max(1, Math.round(h / 1.5));
    for (let k = 0; k < steps; k++) {
      const s = k / steps, s2 = s * s, s3 = s2 * s;
      let y = (2*s3 - 3*s2 + 1) * y0 + (s3 - 2*s2 + s) * h * tangent[i] + (3*s2 - 2*s3) * y1 + (s3 - s2) * h * tangent[i+1];
      seed = (seed * 16807) % 2147483647;
      y += (seed / 2147483647 - .5) * noise;
      d += (d ? "L" : "M") + (x0 + h * s).toFixed(1) + " " + y.toFixed(1);
    }
  }
  return d + "L" + points[n-1].map(v => v.toFixed(1)).join(" ");
}
document.getElementById("traceB").setAttribute("d", tracePath(toPoints(channelB), 7));
document.getElementById("traceA").setAttribute("d", tracePath(toPoints(channelA), 0));

let lines = "";
for (let i = 0; i <= 10; i++) {
  const x = 62 + 371.7 * i, y = 232 + 180.4 * i;
  lines += `<path class="gridline" d="M${x} 232V2036"/><path class="gridline" d="M62 ${y}H3775"/>`;
}
document.getElementById("grid").innerHTML = lines;
</script>
</body>
</html>
